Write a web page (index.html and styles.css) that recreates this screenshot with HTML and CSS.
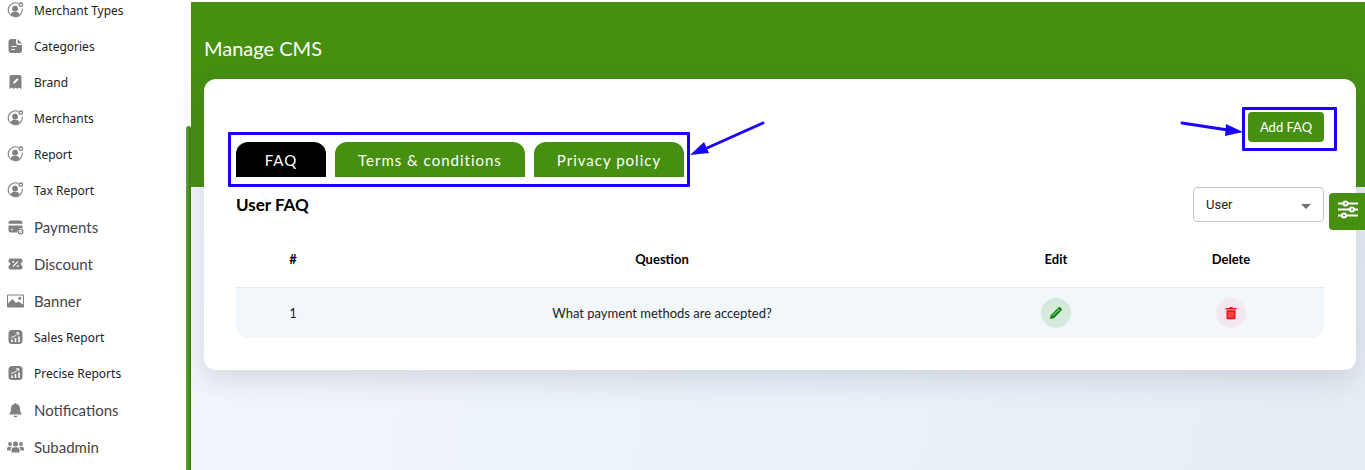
FILE: index.html
```html
<!DOCTYPE html>
<html lang="en">

<head>
  <meta charset="UTF-8" />
  <meta name="viewport" content="width=device-width, initial-scale=1.0" />
  <title>Manage CMS</title>
  <link rel="stylesheet" href="styles.css">
</head>

<body>
  <!-- shared icons -->
  <svg class="sprite" aria-hidden="true">
    <symbol id="i-user" viewBox="0 0 16 16">
      <path d="M11 1.6A7 7 0 1 0 14.6 6.4" fill="none" stroke="currentColor" stroke-width="1.1" />
      <circle cx="7.6" cy="6.6" r="2.9" />
      <path d="M3 12.2c1-2 2.700-2.500 4.600-2.500s3.600.5 4.600 2.500c-1.200 1.500-2.800 2.300-4.600 2.300S4.200 13.700 3 12.200z" />
      <circle cx="13.300" cy="2.700" r="1.700" fill="none" stroke="currentColor" stroke-width="1.300" />
    </symbol>
    <symbol id="i-file" viewBox="0 0 16 16">
      <path d="M4 1h4.500v3.500a2.500 2.500 0 0 0 2.500 2.500h3.500v5a3 3 0 0 1-3 3H4a3 3 0 0 1-3-3V4a3 3 0 0 1 3-3z" />
      <path d="M10 1l4.500 4.600H11.500A1.500 1.500 0 0 1 10 4.100z" />
      <path d="M4 8.500h5M4 11.500h3.500" stroke="#fff" stroke-width="1.200" />
    </symbol>
    <symbol id="i-brand" viewBox="0 0 16 16">
      <path d="M4 1h8a2 2 0 0 1 2 2v12l-2.500-1.500L10 15l-2-1.500L6 15l-1.500-1.500L2 15V3a2 2 0 0 1 2-2z" />
      <path d="M5.500 9.800l.5-2L9.500 4.300l1.500 1.500L7.500 9.300z" fill="#fff" />
    </symbol>
    <symbol id="i-card" viewBox="0 0 16 16">
      <path d="M3.500 1.500h9A2.500 2.500 0 0 1 15 4v.8H1V4a2.500 2.500 0 0 1 2.500-2.500z" />
      <path d="M1 6.500h14v2.700a4 4 0 0 0-5.300 4.300H3.500A2.500 2.500 0 0 1 1 11z" />
      <path d="M3.500 10.700h2" stroke="#fff" />
      <circle cx="13" cy="12.500" r="2.400" fill="none" stroke="currentColor" stroke-width="1.200" />
      <path d="M12 12.600l.8.8 1.300-1.500" fill="none" stroke="currentColor" stroke-width=".8" />
    </symbol>
    <symbol id="i-ticket" viewBox="0 0 16 16">
      <path d="M3 2.500h10a2 2 0 0 1 2 2v1.700a1.800 1.800 0 0 0 0 3.600v1.700a2 2 0 0 1-2 2H3a2 2 0 0 1-2-2V9.800a1.800 1.800 0 0 0 0-3.600V4.500a2 2 0 0 1 2-2z" />
      <path d="M5.500 10.700l5-5.400" stroke="#fff" stroke-width="1.200" />
      <circle cx="5.800" cy="6" r="1" fill="#fff" />
      <circle cx="10.200" cy="10" r="1" fill="#fff" />
    </symbol>
    <symbol id="i-image" viewBox="0 0 17 16">
      <path d="M.5 2h16v12H.5z" fill="none" stroke="currentColor" stroke-width="1" />
      <path d="M.5 14v-3l5-5L9 10l2.500-1.500 5 3.500v2z" />
      <circle cx="12.800" cy="5.200" r="1.500" />
    </symbol>
    <symbol id="i-chart" viewBox="0 0 16 16">
      <rect x="1" y="1" width="14" height="14" rx="3.500" />
      <path d="M4.500 13v-2.500M8 13V9M11.500 13V7.500" stroke="#fff" stroke-width="1.600" />
      <path d="M3.700 8.300c3-.4 5-1.700 7-4.300M8.700 3.700h2.500v2.500" fill="none" stroke="#fff" />
    </symbol>
    <symbol id="i-bell" viewBox="0 0 16 16">
      <path d="M8 1a1 1 0 0 1 1 1c2.300.5 3.500 2.300 3.500 4.500 0 2.500.5 3.700 1.500 4.700v1.300H2v-1.300c1-1 1.500-2.200 1.500-4.700C3.500 4.300 4.700 2.500 7 2a1 1 0 0 1 1-1z" />
      <path d="M6 13.700h4a2 1.600 0 0 1-4 0z" />
    </symbol>
    <symbol id="i-group" viewBox="0 0 17 16">
      <circle cx="3" cy="5" r="1.900" />
      <circle cx="14" cy="5" r="1.900" />
      <circle cx="8.500" cy="5" r="2.500" />
      <path d="M0 11.500V10a2.200 2.200 0 0 1 2.200-2.200h2.700A5 5 0 0 0 3.500 11.500zM17 11.500V10a2.200 2.200 0 0 0-2.200-2.200h-2.700a5 5 0 0 1 1.400 3.700z" />
      <path d="M4.500 13.500v-2a3.200 3.200 0 0 1 3.200-3.200h1.600a3.200 3.200 0 0 1 3.200 3.200v2z" />
    </symbol>
  </svg>

  <div class="layout">
    <nav class="sidebar">
      <ul>
        <li><a href="#"><svg><use href="#i-user" /></svg>Merchant Types</a></li>
        <li><a href="#"><svg><use href="#i-file" /></svg>Categories</a></li>
        <li><a href="#"><svg><use href="#i-brand" /></svg>Brand</a></li>
        <li><a href="#"><svg><use href="#i-user" /></svg>Merchants</a></li>
        <li><a href="#"><svg><use href="#i-user" /></svg>Report</a></li>
        <li><a href="#"><svg><use href="#i-user" /></svg>Tax Report</a></li>
        <li class="light"><a href="#"><svg><use href="#i-card" /></svg>Payments</a></li>
        <li class="light"><a href="#"><svg><use href="#i-ticket" /></svg>Discount</a></li>
        <li class="light"><a href="#"><svg><use href="#i-image" /></svg>Banner</a></li>
        <li><a href="#"><svg><use href="#i-chart" /></svg>Sales Report</a></li>
        <li><a href="#"><svg><use href="#i-chart" /></svg>Precise Reports</a></li>
        <li class="light"><a href="#"><svg><use href="#i-bell" /></svg>Notifications</a></li>
        <li class="light"><a href="#"><svg><use href="#i-group" /></svg>Subadmin</a></li>
      </ul>
      <div class="scrollbar"></div>
    </nav>

    <main class="main">
      <h1>Manage CMS</h1>
      <section class="card">
        <div class="actions">
          <div class="add-wrap">
            <button type="button" class="add">Add FAQ</button>
            <span class="mark"></span>
            <svg class="arrow" width="64" height="20" viewBox="0 0 64 20">
              <path d="M2 4l46 7" />
              <polygon points="46,5 63,13 45,17" />
            </svg>
          </div>
        </div>

        <div class="tabs">
          <button type="button" class="tab active">FAQ</button>
          <button type="button" class="tab">Terms &amp; conditions</button>
          <button type="button" class="tab">Privacy policy</button>
          <span class="mark"></span>
          <svg class="arrow" width="76" height="36" viewBox="0 0 76 36">
            <path d="M73 3L17 28" />
            <polygon points="14,22 0,35 19,33" />
          </svg>
        </div>

        <div class="title-row">
          <h2>User FAQ</h2>
          <div class="select">
            <select aria-label="FAQ type">
              <option>User</option>
              <option>Merchant</option>
            </select>
          </div>
        </div>

        <table>
          <thead>
            <tr>
              <th class="num">#</th>
              <th>Question</th>
              <th class="edit">Edit</th>
              <th class="delete">Delete</th>
            </tr>
          </thead>
          <tbody>
            <tr>
              <td>1</td>
              <td>What payment methods are accepted?</td>
              <td>
                <button type="button" class="icon-btn green" aria-label="Edit">
                  <svg viewBox="0 0 14 14">
                    <path d="M1 13l.8-3.800L9.500 1.500a1.300 1.300 0 0 1 1.800 0l1.200 1.200a1.300 1.300 0 0 1 0 1.800L4.800 12.200z" />
                    <path d="M3.700 9.800l5.500-5.500" stroke="#d4e8dc" stroke-width="1" />
                    <path d="M8.600 2.700l2.700 2.700" stroke="#d4e8dc" stroke-width=".7" />
                  </svg>
                </button>
              </td>
              <td>
                <button type="button" class="icon-btn red" aria-label="Delete">
                  <svg viewBox="0 0 14 14">
                    <path d="M1.500 2h3.700l.6-1h2.400l.6 1h3.700v1.500h-11z" />
                    <path d="M2.500 4.300h9V12a1.300 1.300 0 0 1-1.300 1.300H3.800A1.300 1.300 0 0 1 2.500 12z" />
                    <path d="M5 6v5.500M7 6v5.500M9 6v5.500" stroke="#ff8c90" stroke-width=".8" />
                  </svg>
                </button>
              </td>
            </tr>
          </tbody>
        </table>
      </section>
    </main>
  </div>

  <button type="button" class="settings" aria-label="Settings">
    <svg width="20" height="20" viewBox="0 0 20 20">
      <path d="M0 3.500h20M0 9.500h20M0 15.500h20" />
      <circle cx="7.500" cy="3.500" r="2" />
      <circle cx="14" cy="9.500" r="2" />
      <circle cx="6" cy="15.500" r="2" />
    </svg>
  </button>
</body>

</html>
```
FILE: styles.css
```css
* {
  padding: 0;
  margin: 0;
  box-sizing: border-box;
}

body {
  font-family: Lato, "Liberation Sans", sans-serif;
  font-size: 14px;
  color: #222;
  overflow: hidden;
}

button {
  border: 0;
  font-family: inherit;
  cursor: pointer;
}

.sprite {
  display: none;
}

.layout {
  display: flex;
  height: 100vh;
}

/* sidebar */
.sidebar {
  display: flex;
  flex: none;
  width: 191px;
  overflow: hidden;
  background: #fff;
}

.sidebar ul {
  flex: 1;
  margin-top: -8px;
  list-style: none;
}

.sidebar a {
  display: flex;
  align-items: center;
  gap: 10px;
  height: 36px;
  padding-left: 7px;
  font: 12px "Noto Sans", "Open Sans", sans-serif;
  color: #222;
  text-decoration: none;
}

.sidebar .light a {
  height: 37px;
  font: 15px Lato, sans-serif;
  color: #444;
}

.sidebar svg {
  width: 17px;
  height: 16px;
  color: #808080;
  fill: currentColor;
}

.scrollbar {
  width: 5px;
  margin-top: 126px;
  border-radius: 3px 3px 0 0;
  background: linear-gradient(90deg, #62a63a, #3b7a0e);
}

/* content */
.main {
  flex: 1;
  padding: 2px 9px 0 13px;
  background:
    linear-gradient(#fff, #fff) 0 0 / 100% 2px no-repeat,
    linear-gradient(#468f11, #468f11) 0 0 / 100% 187px no-repeat,
    linear-gradient(100deg, #f4f7fc, #eaf2fa 50%, #e6edf5);
}

h1 {
  padding: 34px 0 19px;
  font-size: 20px;
  line-height: 24px;
  font-weight: 400;
  color: #fff;
}

.card {
  padding: 33px 32px 32px;
  border-radius: 12px;
  background: #fff;
  box-shadow: 0 10px 30px rgba(40, 50, 60, 0.15);
}

.actions {
  display: flex;
  justify-content: flex-end;
}

.add-wrap,
.tabs,
.select {
  position: relative;
}

.add {
  display: block;
  width: 76px;
  height: 30px;
  border-radius: 4px;
  background: #468f11;
  color: #fff;
  font-size: 13px;
}

.tabs {
  display: flex;
  gap: 9px;
  width: max-content;
}

.tab {
  height: 35px;
  padding: 0 23px;
  border-radius: 12px 12px 0 0;
  background: #468f11;
  color: #fff;
  font-size: 15px;
  letter-spacing: 1px;
}

.tab.active {
  min-width: 90px;
  background: #000;
}

/* highlight frames and arrows */
.mark {
  position: absolute;
  border: 3px solid #1a00ff;
  border-radius: 1px;
  pointer-events: none;
}

.add-wrap .mark {
  inset: -5px -13px -9px -6px;
}

.tabs .mark {
  inset: -10px -6px -10px -8px;
}

.arrow {
  position: absolute;
  fill: #1a00ff;
}

.arrow path {
  fill: none;
  stroke: #1a00ff;
  stroke-width: 3;
  stroke-linecap: round;
}

.add-wrap .arrow {
  top: 7px;
  right: 80px;
}

.tabs .arrow {
  top: -22px;
  left: calc(100% + 6px);
}

.title-row {
  display: flex;
  justify-content: space-between;
  padding-top: 10px;
}

h2 {
  font-size: 17px;
  line-height: 35px;
  font-weight: 700;
  color: #000;
}

.select select {
  width: 131px;
  height: 35px;
  padding-left: 12px;
  border: 1px solid #c4c4c4;
  border-radius: 4px;
  background: #fff;
  font: 13px Roboto, sans-serif;
  color: #222;
  appearance: none;
}

.select::after {
  content: "";
  position: absolute;
  top: 17px;
  right: 13px;
  border: 5px solid transparent;
  border-top-color: #707070;
  pointer-events: none;
}

/* table */
table {
  width: 100%;
  border-collapse: separate;
  border-spacing: 0;
  table-layout: fixed;
  text-align: center;
  font-size: 13px;
}

th {
  height: 66px;
  padding-bottom: 10px;
  padding-top: 18px;
  border-bottom: 1px solid #e6e9ec;
  font-weight: 700;
  color: #000;
}

td {
  height: 50px;
  background: #f2f7fc;
}

td:first-child {
  border-bottom-left-radius: 12px;
}

td:last-child {
  border-bottom-right-radius: 12px;
}

.num {
  width: 114px;
}

.edit {
  width: 164px;
}

.delete {
  width: 186px;
}

.icon-btn {
  display: flex;
  align-items: center;
  justify-content: center;
  width: 30px;
  height: 30px;
  margin: 0 auto;
  border-radius: 50%;
}

.icon-btn svg {
  width: 14px;
  height: 14px;
  fill: currentColor;
}

.green {
  background: #d4e8dc;
  color: #078407;
}

.red {
  background: #f3e8ef;
  color: #fb0d17;
}

.settings {
  display: flex;
  align-items: center;
  justify-content: center;
  position: fixed;
  top: 193px;
  right: 0;
  width: 36px;
  height: 37px;
  padding: 0 0 3px 2px;
  border-radius: 4px 0 0 4px;
  background: #468f11;
}

.settings svg {
  fill: #468f11;
  stroke: #fff;
  stroke-width: 2;
}
```
